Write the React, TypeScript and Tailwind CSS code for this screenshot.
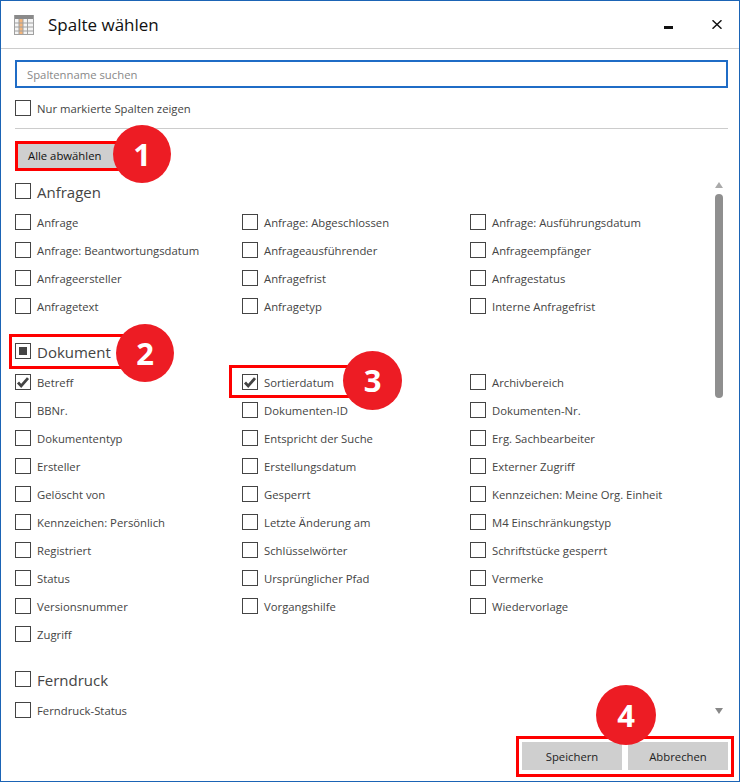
import React from 'react';

const anfragen = [
  'Anfrage', 'Anfrage: Abgeschlossen', 'Anfrage: Ausführungsdatum',
  'Anfrage: Beantwortungsdatum', 'Anfrageausführender', 'Anfrageempfänger',
  'Anfrageersteller', 'Anfragefrist', 'Anfragestatus',
  'Anfragetext', 'Anfragetyp', 'Interne Anfragefrist',
];

const dokument = [
  'Betreff', 'Sortierdatum', 'Archivbereich',
  'BBNr.', 'Dokumenten-ID', 'Dokumenten-Nr.',
  'Dokumententyp', 'Entspricht der Suche', 'Erg. Sachbearbeiter',
  'Ersteller', 'Erstellungsdatum', 'Externer Zugriff',
  'Gelöscht von', 'Gesperrt', 'Kennzeichen: Meine Org. Einheit',
  'Kennzeichen: Persönlich', 'Letzte Änderung am', 'M4 Einschränkungstyp',
  'Registriert', 'Schlüsselwörter', 'Schriftstücke gesperrt',
  'Status', 'Ursprünglicher Pfad', 'Vermerke',
  'Versionsnummer', 'Vorgangshilfe', 'Wiedervorlage',
  'Zugriff',
];

const checked = ['Betreff', 'Sortierdatum'];

function Box({ state }: { state?: 'checked' | 'partial' }) {
  return (
    <span className="w-4 h-4 shrink-0 border border-[#444] bg-white flex items-center justify-center">
      {state === 'checked' && (
        <svg width="14" height="14" viewBox="0 0 14 14">
          <path d="M2 7.5 L5.2 11 L12 3.2" fill="none" stroke="#444" strokeWidth="2.8" />
        </svg>
      )}
      {state === 'partial' && <span className="w-2 h-2 bg-[#444]" />}
    </span>
  );
}

function Item({ label }: { label: string }) {
  return (
    <div className="h-7 flex items-center gap-[6px] text-[11.3px] text-[#444]">
      <Box state={checked.includes(label) ? 'checked' : undefined} />
      <span className="whitespace-nowrap mt-[2px]">{label}</span>
    </div>
  );
}

function Section({ title, state, items }: { title: string; state?: 'partial'; items: string[] }) {
  return (
    <div>
      <div className="h-6 flex items-center gap-[6px] text-[15px] text-[#444]">
        <Box state={state} />
        <span className="mt-[2px]">{title}</span>
      </div>
      <div className="grid grid-cols-[227px_228px_1fr] mt-[5px]">
        {items.map((item) => (
          <Item key={item} label={item} />
        ))}
      </div>
    </div>
  );
}

function Callout({ n, className }: { n: number; className: string }) {
  return (
    <div className={`absolute rounded-full bg-[#ed1c24] text-white font-bold text-[31px] flex items-center justify-center ${className}`}>
      {n}
    </div>
  );
}

function TableIcon() {
  return (
    <svg width="20" height="20" viewBox="0 0 20 20">
      <rect x="0" y="0" width="20" height="20" fill="#f4f4f4" />
      <rect x="0" y="0" width="20" height="4" fill="#8a8a8a" />
      <rect x="5" y="4" width="4" height="16" fill="#f5b57a" />
      <path d="M0.5 0V20M5 4V20M9 4V20M13.5 4V20M19.5 0V20M0 8H20M0 12H20M0 16H20M0 19.5H20" stroke="#a0a0a0" strokeWidth="1" fill="none" />
    </svg>
  );
}

export default function App() {
  return (
    <div className="relative w-[740px] h-[782px] bg-white border border-[#1b64b5] flex flex-col overflow-hidden font-['Open_Sans',sans-serif]">
      <div className="h-[48px] shrink-0 border-b border-[#ccc] flex items-center pl-[13px] pr-[17px]">
        <TableIcon />
        <span className="ml-[14px] text-[17px] text-[#111]">Spalte wählen</span>
        <div className="ml-auto flex items-center gap-[39px]">
          <span className="w-[9px] h-[3px] bg-[#111] mt-[6px]" />
          <svg width="10" height="9" viewBox="0 0 10 9">
            <path d="M0.5 0.3L9.5 8.7M9.5 0.3L0.5 8.7" stroke="#111" strokeWidth="1.5" />
          </svg>
        </div>
      </div>

      <div className="pl-[14px] pr-[11px] shrink-0">
        <div className="mt-[11px] h-[28px] border-2 border-[#1f6cc6] flex items-center pl-[10px] text-[11.3px] text-[#888]">
          <span className="mt-[3px]">Spaltenname suchen</span>
        </div>
        <div className="mt-[12px] h-4 flex items-center gap-[6px] text-[11.3px] text-[#444]">
          <Box />
          <span className="mt-[3px]">Nur markierte Spalten zeigen</span>
        </div>
        <div className="mt-[12px] border-t border-[#ccc]" />
        <button className="mt-[14px] ml-[3px] h-[25px] w-[100px] bg-[#cfcfcf] text-[11.3px] text-[#111] text-left pl-[10px] pt-[2px]">
          Alle abwählen
        </button>
      </div>

      <div className="relative flex-1 min-h-0 overflow-hidden pl-[14px] pr-[40px] pt-[11px]">
        <div className="flex flex-col gap-[19px]">
          <Section title="Anfragen" items={anfragen} />
          <Section title="Dokument" state="partial" items={dokument} />
          <Section title="Ferndruck" items={['Ferndruck-Status']} />
        </div>
      </div>

      <div className="h-[55px] shrink-0 flex items-start justify-end gap-[6px] pt-[16px] pr-[11px] text-[11.3px] text-[#222]">
        <button className="w-[100px] h-[28px] bg-[#cfcfcf] pt-[2px]">Speichern</button>
        <button className="w-[100px] h-[28px] bg-[#cfcfcf] pt-[2px]">Abbrechen</button>
      </div>

      {/* scrollbar */}
      <div className="absolute left-[714px] top-[193px] w-2 h-[204px] rounded-full bg-[#8f8f8f]" />
      <div className="absolute left-[714px] top-[181px] w-0 h-0 border-x-4 border-x-transparent border-b-[6px] border-b-[#aaa]" />
      <div className="absolute left-[714px] top-[707px] w-0 h-0 border-x-4 border-x-transparent border-t-[6px] border-t-[#888]" />

      {/* annotations */}
      <div className="absolute left-[14px] top-[140px] w-[105px] h-[30px] border-[3px] border-[#fe0000]" />
      <div className="absolute left-[8px] top-[333px] w-[118px] h-[35px] border-[3px] border-[#fe0000]" />
      <div className="absolute left-[228px] top-[364px] w-[122px] h-[33px] border-[3px] border-[#fe0000]" />
      <div className="absolute left-[515px] top-[735px] w-[218px] h-[41px] border-[3px] border-[#fe0000]" />
      <Callout n={1} className="left-[112px] top-[124px] w-[58px] h-[58px]" />
      <Callout n={2} className="left-[115px] top-[323px] w-[58px] h-[58px]" />
      <Callout n={3} className="left-[342px] top-[350px] w-[59px] h-[59px]" />
      <Callout n={4} className="left-[595px] top-[684px] w-[60px] h-[60px]" />
    </div>
  );
}
